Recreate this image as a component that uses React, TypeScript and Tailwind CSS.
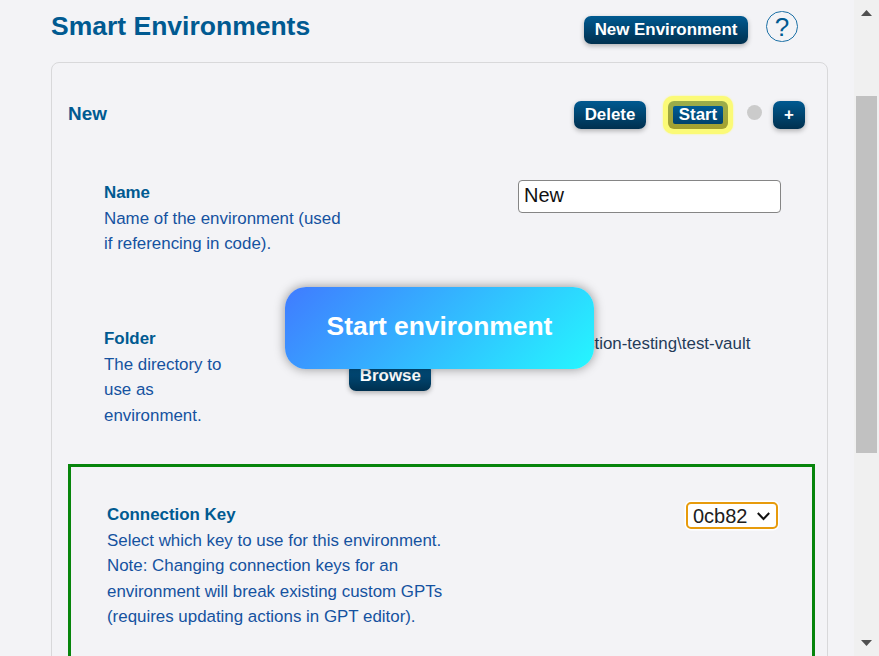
import type { ReactNode } from "react";

function Button({ className = "", children }: { className?: string; children: ReactNode }) {
  return (
    <button
      className={`flex shrink-0 items-center justify-center whitespace-nowrap rounded-[7px] bg-linear-to-b from-[#005a91] to-[#00304f] pb-px text-[16.9px] font-bold text-white shadow-[0_2px_5px_rgba(0,0,0,0.28)] ${className}`}
    >
      {children}
    </button>
  );
}

function Label({ title, lines }: { title: string; lines: string[] }) {
  return (
    <div className="whitespace-nowrap text-[16.9px] leading-[25.6px] text-[#1552a0]">
      <div className="font-bold text-[#005a91]">{title}</div>
      {lines.map((line) => (
        <div key={line}>{line}</div>
      ))}
    </div>
  );
}

function Scrollbar() {
  return (
    <div className="flex h-full w-[25px] shrink-0 flex-col items-center bg-[#f0f0f0]">
      <svg className="mt-[10px] block" width="11" height="6" viewBox="0 0 11 6">
        <path d="M0 6 5.5 0 11 6Z" fill="#505050" />
      </svg>
      <div className="mt-20 h-[357px] w-[21px] bg-[#c1c1c1]" />
      <svg className="mt-[187px] block" width="11" height="6" viewBox="0 0 11 6">
        <path d="M0 0 5.5 6 11 0Z" fill="#505050" />
      </svg>
    </div>
  );
}

export default function App() {
  return (
    <div className="relative flex h-[656px] w-[879px] overflow-hidden bg-[#f3f3f6] font-['Liberation_Sans',Arial,sans-serif]">
      <main className="h-full flex-1 pl-[51px] pr-[26px]">
        <header className="flex h-[62px] items-start">
          <h1 className="flex-1 whitespace-nowrap pt-[11px] text-[26.5px] font-bold leading-[30px] text-[#005a91]">
            Smart Environments
          </h1>
          <Button className="mt-4 h-7 w-[164px]">New Environment</Button>
          <div className="ml-[18px] mr-[30px] mt-[11px] flex h-[31px] w-8 items-center justify-center rounded-full border border-[#1a6fa5] text-[26px] leading-none text-[#005a91]">
            ?
          </div>
        </header>

        <section className="h-[620px] rounded-[8px] border-[1.5px] border-[#d8d8da] pl-4 pr-3">
          <div className="flex h-[117px] items-start pr-[10px]">
            <h2 className="flex-1 pt-[40px] text-[18.9px] font-bold leading-[22px] text-[#005a91]">New</h2>
            <Button className="mt-[38px] h-7 w-[72px]">Delete</Button>
            <div className="ml-[17px] mt-[33px] rounded-[10px] bg-[#fbfa77] p-[5px] shadow-[0_0_2px_#fbfa77]">
              <div className="rounded-[6px] bg-linear-to-b from-[#9aad4c] to-[#a4a02d] p-[5px]">
                <div className="flex h-[18px] w-[50px] items-center justify-center rounded-[2px] bg-linear-to-b from-[#005c96] to-[#00426c] text-[16.9px] font-bold text-white">
                  Start
                </div>
              </div>
            </div>
            <div className="ml-[14px] mt-[42px] size-[15px] rounded-full bg-[#cbcbcb]" />
            <Button className="ml-[11px] mt-[38px] h-7 w-8">+</Button>
          </div>

          <div className="flex h-[146px] items-start justify-between pl-9 pr-[34px]">
            <Label title="Name" lines={["Name of the environment (used", "if referencing in code)."]} />
            <input
              className="h-[33px] w-[263px] rounded-[4px] border border-[#858585] bg-white px-[5px] pb-[2px] text-[20px] text-[#111] outline-none"
              defaultValue="New"
            />
          </div>

          <div className="flex h-[138px] items-start pl-9">
            <Label title="Folder" lines={["The directory to", "use as", "environment."]} />
            <div className="ml-32 flex w-[401px] flex-col items-start pt-[5px]">
              <div className="w-full whitespace-nowrap text-right text-[16.9px] leading-[25.6px] text-[#243b59]">
                C:\projects\vaults\production-testing\test-vault
              </div>
              <Button className="mt-[6px] h-7 w-[82px]">Browse</Button>
            </div>
          </div>

          <div className="flex h-[220px] items-start justify-between border-[3px] border-[#07850c] pl-9 pr-[34px] pt-[35px]">
            <Label
              title="Connection Key"
              lines={[
                "Select which key to use for this environment.",
                "Note: Changing connection keys for an",
                "environment will break existing custom GPTs",
                "(requires updating actions in GPT editor).",
              ]}
            />
            <div className="flex h-[27px] w-[92px] items-center rounded-[5px] border-[2.5px] border-[#e79b0c] bg-white pl-[5px] text-[20px] leading-none text-[#202020] shadow-[0_0_0_1.5px_#fff]">
              <span>0cb82</span>
              <svg className="ml-[9px] mt-[2px]" width="13" height="9" viewBox="0 0 13 9" fill="none">
                <path d="M.8 1 6.5 7 12.2 1" stroke="#111" strokeWidth="2" />
              </svg>
            </div>
          </div>
        </section>
      </main>
      <Scrollbar />

      <div className="absolute left-[285px] top-[287px] flex h-[82px] w-[309px] items-center justify-center whitespace-nowrap rounded-[21px] bg-linear-[135deg] from-[#407bff] to-[#25f7ff] pb-[3px] text-[26.4px] font-bold text-white shadow-[0_0_11px_rgba(0,0,0,0.4)]">
        Start environment
      </div>
    </div>
  );
}
